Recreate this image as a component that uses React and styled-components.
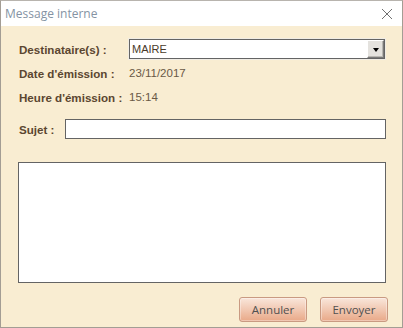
import React from 'react'
import styled, { createGlobalStyle } from 'styled-components'

const GlobalStyle = createGlobalStyle`
  html, body { margin: 0; padding: 0; background: #ffffff; }
  * { box-sizing: border-box; }
`

const Window = styled.div`
  width: 403px;
  height: 328px;
  display: flex;
  flex-direction: column;
  border: 1px solid #a39d94;
  border-top-color: #b8b4ae;
  background: #f9edd2;
`

const TitleBar = styled.div`
  height: 25px;
  flex: none;
  display: flex;
  align-items: center;
  justify-content: space-between;
  padding: 0 9px 0 4px;
  background: #ffffff;
  font-family: 'Open Sans', 'Noto Sans', sans-serif;
  font-size: 12px;
  color: #8493a3;
`

const CloseIcon = styled.svg`
  width: 12px;
  height: 12px;
  display: block;
`

const Body = styled.div`
  flex: 1;
  display: flex;
  flex-direction: column;
  padding: 13px 16px 5px 17px;
`

const InfoGrid = styled.div`
  display: grid;
  grid-template-columns: 111px 1fr;
  grid-auto-rows: 20px;
  row-gap: 4px;
  align-items: center;
`

const Label = styled.span`
  font-family: 'Liberation Sans', Arial, sans-serif;
  font-weight: bold;
  font-size: 11.6px;
  color: #5b4630;
  padding-left: 1px;
  white-space: nowrap;
`

const Value = styled.span`
  font-family: 'Liberation Sans', Arial, sans-serif;
  font-size: 11.5px;
  color: #6a5946;
`

const Combo = styled.div`
  height: 20px;
  margin-right: 1px;
  display: flex;
  align-items: stretch;
  background: #ffffff;
  border: 1px solid #646464;
  box-shadow: 0 0 0 1px #f0ece4;
`

const ComboText = styled.div`
  flex: 1;
  display: flex;
  align-items: center;
  padding-left: 2px;
  font-family: 'Liberation Sans', Arial, sans-serif;
  font-size: 11px;
  color: #4a3a28;
`

const ComboButton = styled.div`
  width: 17px;
  display: flex;
  align-items: center;
  justify-content: center;
  background: #e4e2de;
  border-top: 1px solid #ffffff;
  border-left: 1px solid #ffffff;
  border-right: 1px solid #7a7a7a;
  border-bottom: 1px solid #7a7a7a;
  box-shadow: inset -1px -1px 0 #b8b6b2;
`

const Arrow = styled.span`
  width: 0;
  height: 0;
  border-left: 3.5px solid transparent;
  border-right: 3.5px solid transparent;
  border-top: 4px solid #000000;
  margin-top: 1px;
`

const SubjectRow = styled.div`
  display: flex;
  align-items: center;
  margin-top: 12px;
  height: 20px;
`

const SubjectLabel = styled(Label)`
  width: 47px;
  flex: none;
`

const TextInput = styled.div`
  flex: 1;
  height: 20px;
  background: #ffffff;
  border: 1px solid #646464;
`

const MessageArea = styled.div`
  margin-top: 23px;
  height: 121px;
  background: #ffffff;
  border: 1px solid #646464;
`

const Actions = styled.div`
  margin-top: 14px;
  margin-right: -2px;
  display: flex;
  justify-content: flex-end;
  gap: 13px;
`

const Button = styled.button`
  width: 68px;
  height: 25px;
  padding: 0;
  border: 1px solid #c99a82;
  border-radius: 3px;
  background: linear-gradient(to bottom, #f9e6da 0%, #f1c8b2 50%, #e9a988 100%);
  box-shadow: inset 0 0 0 1px rgba(255, 255, 255, 0.35);
  font-family: 'Open Sans', 'Noto Sans', sans-serif;
  font-size: 11.5px;
  color: #505050;
`

export default function App() {
  return (
    <>
      <GlobalStyle />
      <Window>
        <TitleBar>
          <span>Message interne</span>
          <CloseIcon viewBox="0 0 12 12">
            <path d="M1 1 L11 11 M11 1 L1 11" stroke="#707070" strokeWidth="1" fill="none" />
          </CloseIcon>
        </TitleBar>
        <Body>
          <InfoGrid>
            <Label>Destinataire(s) :</Label>
            <Combo>
              <ComboText>MAIRE</ComboText>
              <ComboButton>
                <Arrow />
              </ComboButton>
            </Combo>
            <Label>Date d'émission :</Label>
            <Value>23/11/2017</Value>
            <Label>Heure d'émission :</Label>
            <Value>15:14</Value>
          </InfoGrid>
          <SubjectRow>
            <SubjectLabel>Sujet :</SubjectLabel>
            <TextInput />
          </SubjectRow>
          <MessageArea />
          <Actions>
            <Button>Annuler</Button>
            <Button>Envoyer</Button>
          </Actions>
        </Body>
      </Window>
    </>
  )
}
